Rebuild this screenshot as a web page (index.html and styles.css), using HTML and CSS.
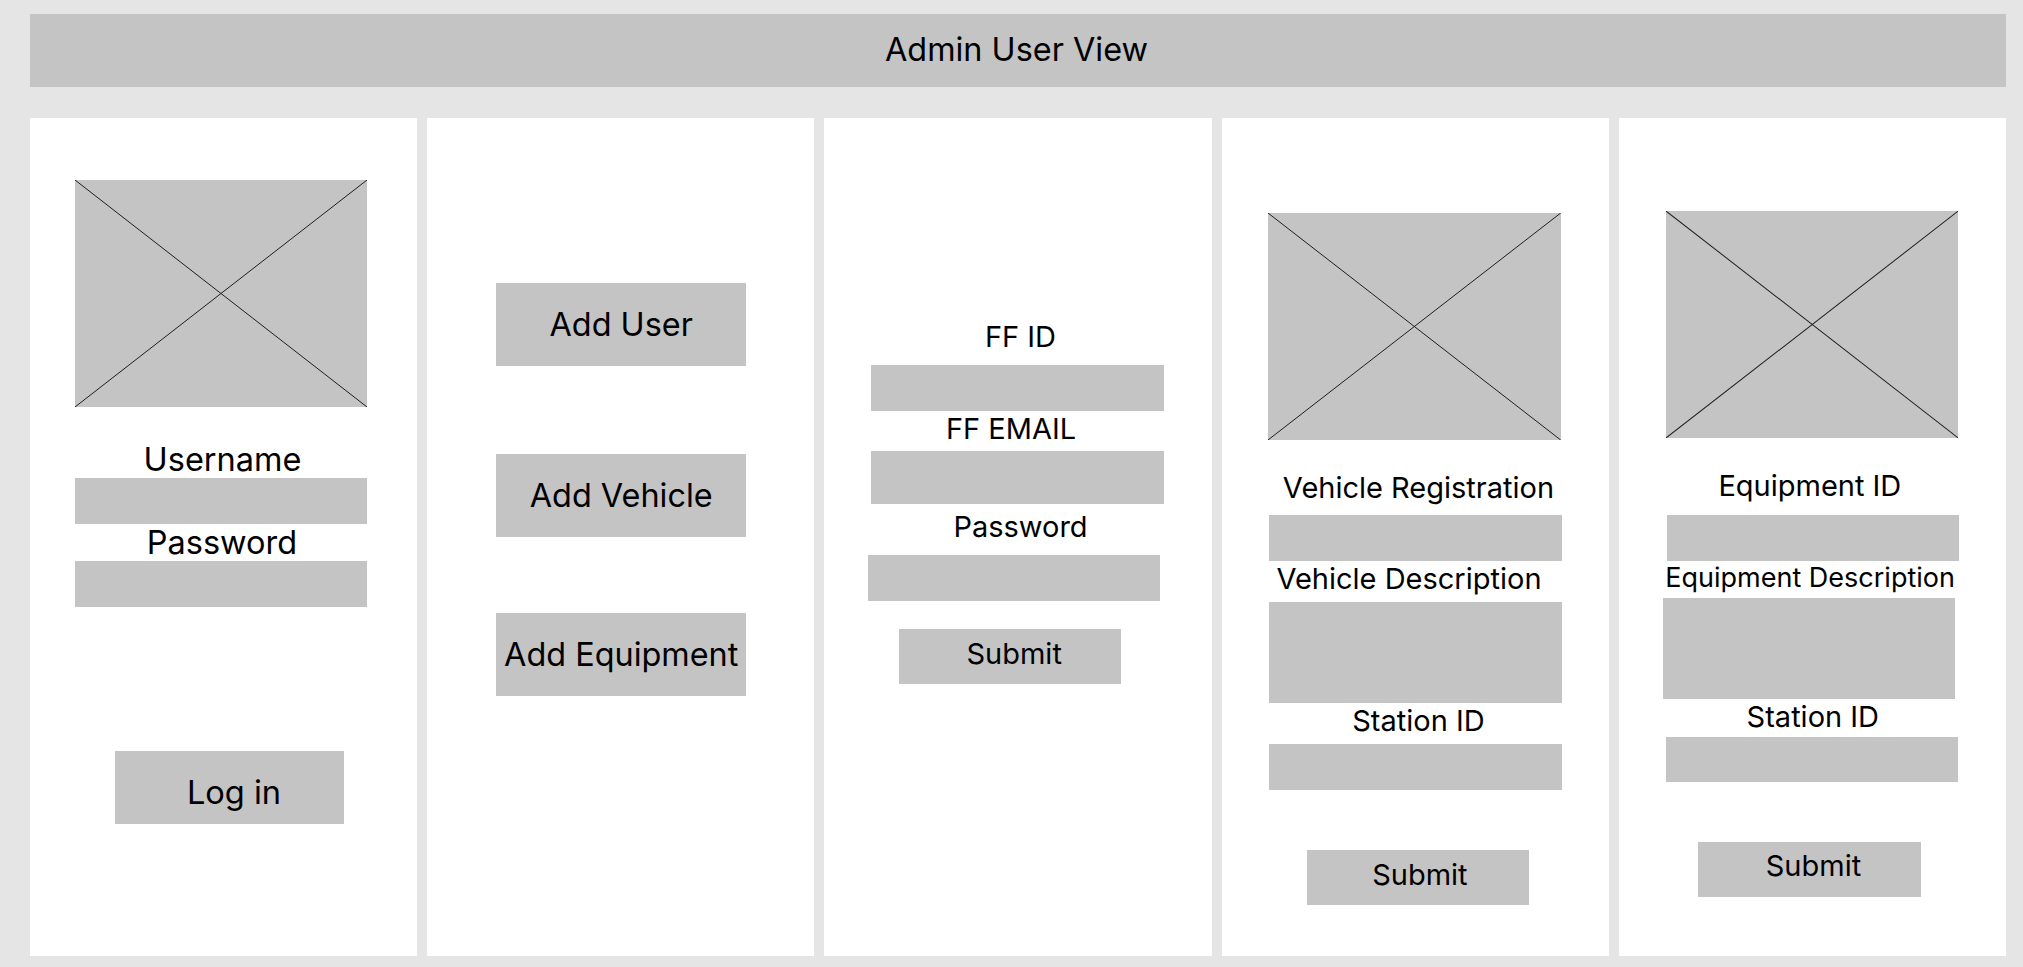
FILE: index.html
```html
<!DOCTYPE html>
<html lang="en">
<head>
<meta charset="utf-8">
<title>Admin User View</title>
<link rel="stylesheet" href="styles.css">
</head>
<body>
<div class="page">
  <header class="topbar"><h1 class="title">Admin User View</h1></header>
  <main class="columns">
    <section class="panel p1">
      <svg class="ph" viewBox="0 0 100 100" preserveAspectRatio="none"><line x1="0" y1="0" x2="100" y2="100"/><line x1="0" y1="100" x2="100" y2="0"/></svg>
      <div class="lbl l-user">Username</div>
      <div class="field f-a"></div>
      <div class="lbl l-pass">Password</div>
      <div class="field f-b"></div>
      <div class="btn b-login">Log in</div>
    </section>
    <section class="panel p2">
      <div class="btn big b-user">Add User</div>
      <div class="btn big b-vehicle">Add Vehicle</div>
      <div class="btn big b-equip">Add Equipment</div>
    </section>
    <section class="panel p3">
      <div class="lbl l-ffid">FF ID</div>
      <div class="field f-ffid"></div>
      <div class="lbl l-ffemail">FF EMAIL</div>
      <div class="field f-ffemail"></div>
      <div class="lbl l-ffpass">Password</div>
      <div class="field f-ffpass"></div>
      <div class="btn sub s3">Submit</div>
    </section>
    <section class="panel p4">
      <svg class="ph" viewBox="0 0 100 100" preserveAspectRatio="none"><line x1="0" y1="0" x2="100" y2="100"/><line x1="0" y1="100" x2="100" y2="0"/></svg>
      <div class="lbl l-vreg">Vehicle Registration</div>
      <div class="field f-vreg"></div>
      <div class="lbl l-vdesc">Vehicle Description</div>
      <div class="field desc f-vdesc"></div>
      <div class="lbl l-vst">Station ID</div>
      <div class="field f-vst"></div>
      <div class="btn sub s4">Submit</div>
    </section>
    <section class="panel p5">
      <svg class="ph" viewBox="0 0 100 100" preserveAspectRatio="none"><line x1="0" y1="0" x2="100" y2="100"/><line x1="0" y1="100" x2="100" y2="0"/></svg>
      <div class="lbl l-eid">Equipment ID</div>
      <div class="field f-eid"></div>
      <div class="lbl l-edesc">Equipment Description</div>
      <div class="field desc f-edesc"></div>
      <div class="lbl l-est">Station ID</div>
      <div class="field f-est"></div>
      <div class="btn sub s5">Submit</div>
    </section>
  </main>
</div>
</body>
</html>
```
FILE: styles.css
```css
* { box-sizing: border-box; }
html, body { margin: 0; padding: 0; }
body {
  background: #e5e5e5;
  font-family: Inter, "Noto Sans", "Liberation Sans", sans-serif;
  color: #000;
}
.page {
  width: 2023px;
  height: 967px;
  padding: 14px 17px 11px 30px;
}
.topbar {
  height: 73px;
  background: #c4c4c4;
  display: flex;
  align-items: center;
  justify-content: center;
  padding: 0 3px 1px 0;
}
.title {
  margin: 0;
  font-size: 32.4px;
  font-weight: 400;
  line-height: 38px;
}
.columns {
  margin-top: 31px;
  height: 838px;
  display: grid;
  grid-template-columns: repeat(5, 1fr);
  column-gap: 10px;
}
.panel {
  background: #fff;
  display: flex;
  flex-direction: column;
  align-items: flex-start;
}
.ph {
  display: block;
  background: #c4c4c4;
  height: 227px;
  flex: none;
}
.ph line {
  stroke: #1e1e1e;
  stroke-width: 1;
  vector-effect: non-scaling-stroke;
}
.field {
  background: #c4c4c4;
  height: 46px;
  flex: none;
}
.lbl {
  font-size: 29px;
  line-height: 34px;
  height: 34px;
  text-align: center;
  white-space: nowrap;
  flex: none;
}
.btn {
  background: #c4c4c4;
  display: flex;
  align-items: center;
  justify-content: center;
  white-space: nowrap;
  flex: none;
}

/* panel 1: login */
.p1 { padding-top: 62px; }
.p1 .ph { margin-left: 45px; width: 292px; }
.p1 .lbl { margin-left: 45px; width: 292px; font-size: 32.5px; line-height: 37px; height: 37px; }
.p1 .field { margin-left: 45px; width: 292px; }
.l-user { margin-top: 34px; padding-left: 3px; }
.l-pass { padding-left: 2px; }
.b-login {
  margin-left: 85px;
  margin-top: 144px;
  width: 229px;
  height: 73px;
  font-size: 32.6px;
  padding: 8px 0 0 9px;
}

/* panel 2: actions */
.p2 { padding-top: 165px; }
.big {
  margin-left: 69px;
  width: 250px;
  height: 83px;
  font-size: 32.4px;
}
.b-vehicle { margin-top: 88px; }
.b-equip { margin-top: 76px; }

/* panel 3: add user */
.p3 { padding-top: 202px; }
.p3 .lbl { margin-left: 46.6px; width: 293px; }
.l-ffid { padding-left: 6px; }
.f-ffid { margin-left: 46.6px; width: 293px; margin-top: 10.5px; }
.l-ffemail { margin-top: 1px; padding-right: 13px; }
.f-ffemail { margin-left: 46.6px; width: 293px; height: 53px; margin-top: 5.5px; }
.l-ffpass { margin-top: 6px; padding-left: 6px; }
.f-ffpass { margin-left: 43.3px; width: 292px; margin-top: 10.7px; }
.sub {
  width: 222.4px;
  height: 55.5px;
  font-size: 29px;
}
.s3 { margin-left: 74.6px; margin-top: 28px; height: 55px; padding: 0 0 6px 8px; }

/* panel 4: vehicle */
.p4 { padding-top: 95px; }
.p4 .ph { margin-left: 46.7px; width: 292.7px; }
.p4 .lbl, .p4 .field { margin-left: 47.7px; width: 292.4px; }
.desc { height: 101px; }
.l-vreg { margin-top: 30.5px; padding-left: 6px; }
.f-vreg { margin-top: 10.8px; }
.l-vdesc { margin-top: 0.6px; padding-right: 13px; }
.f-vdesc { margin-top: 6px; }
.l-vst { margin-top: 0.8px; padding-left: 6px; }
.f-vst { margin-top: 6.2px; }
.s4 { margin-left: 85.1px; margin-top: 60px; padding: 0 0 7px 4px; }

/* panel 5: equipment */
.p5 { padding-top: 92.7px; }
.p5 .ph { margin-left: 46.9px; width: 292.3px; }
.p5 .lbl { margin-left: 47.9px; width: 292.3px; }
.l-eid { margin-top: 31.5px; padding-right: 6px; }
.f-eid { margin-left: 47.9px; width: 292.3px; margin-top: 11.8px; }
.p5 .l-edesc { margin-left: 45.2px; font-size: 27px; }
.f-edesc { margin-left: 44.5px; width: 292px; height: 100.7px; margin-top: 3px; }
.l-est { margin-top: 1px; }
.f-est { margin-left: 47.2px; width: 292px; margin-top: 3px; height: 45.6px; }
.s5 { margin-left: 79.5px; margin-top: 59.4px; padding: 0 0 7.6px 8px; }
```
